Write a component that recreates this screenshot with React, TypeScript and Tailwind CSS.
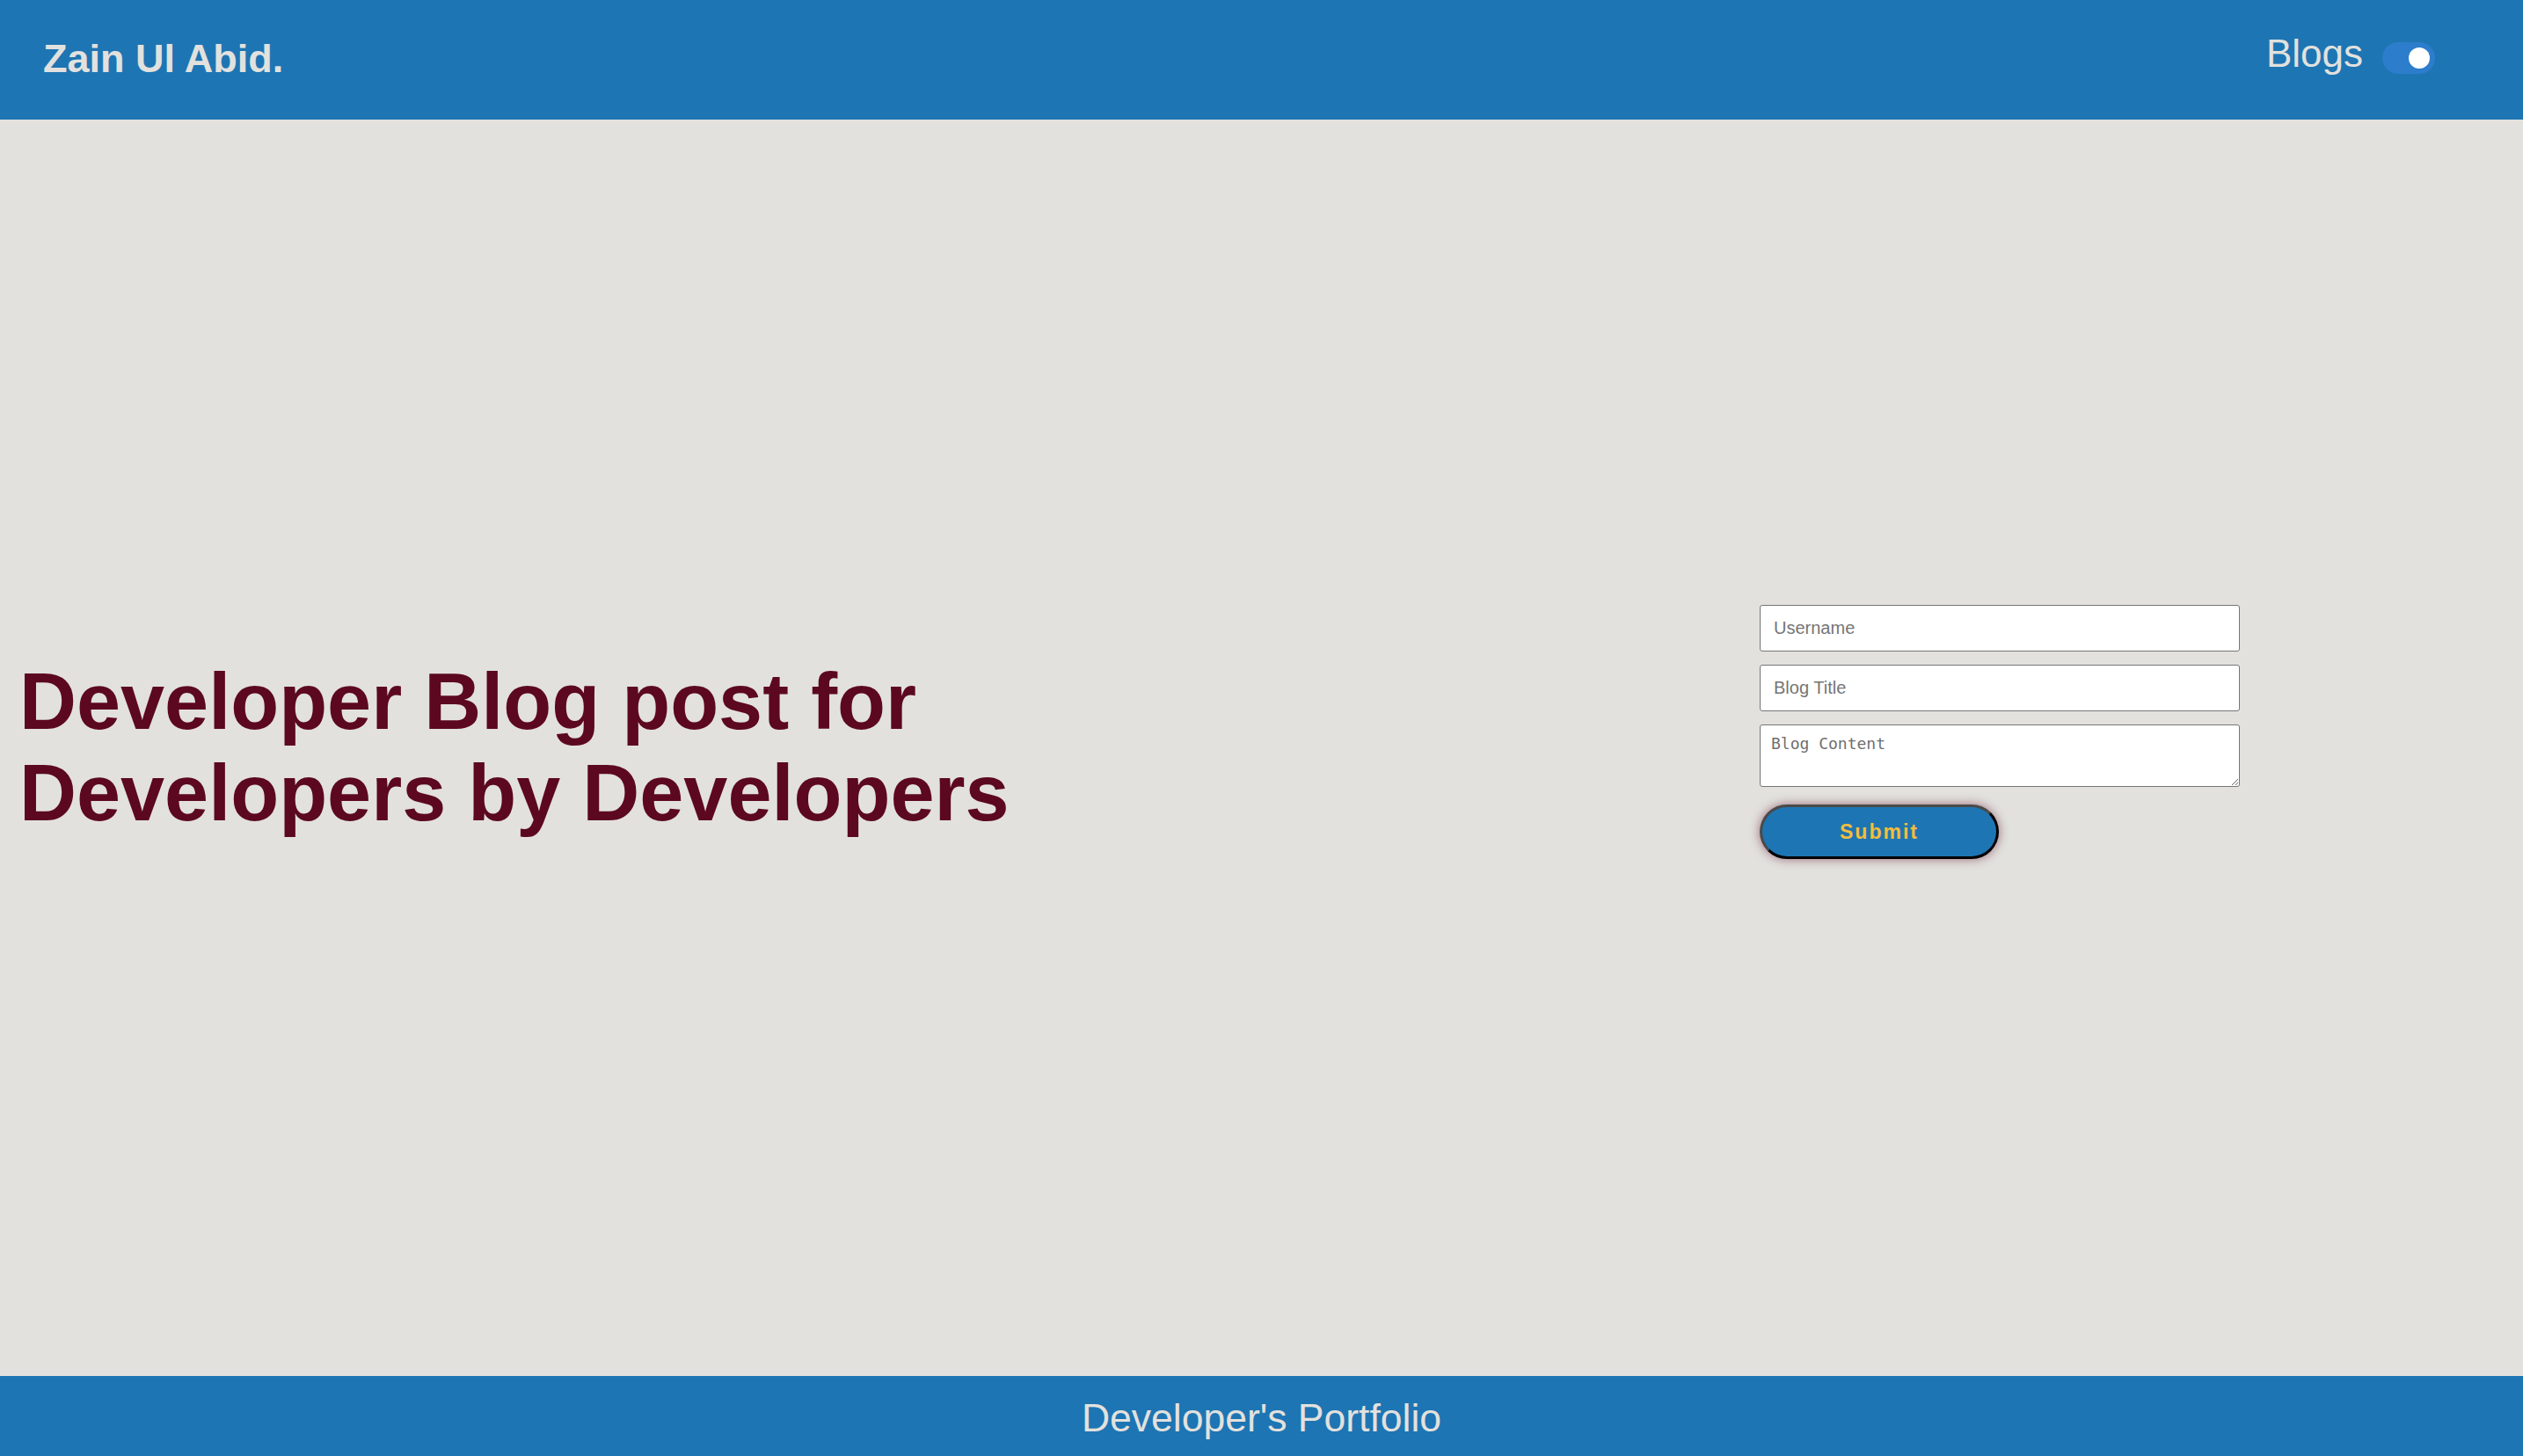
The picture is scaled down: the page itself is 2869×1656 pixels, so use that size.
const sans = "font-['Liberation_Sans',Arial,sans-serif]";

const Header = () => {
  return (
    <header className={`flex h-[136px] shrink-0 items-center justify-between bg-[#1e75b3] pl-[49px] pr-[100px] ${sans}`}>
      <h1 className="mb-[3px] text-[45px] font-bold leading-[1.15] text-[#e2e1de]">Zain Ul Abid.</h1>
      <div className="flex items-center gap-[22px]">
        <span className="mb-[14px] text-[44px] leading-[1.15] text-[#e2e1de]">Blogs</span>
        <div className="mb-[4px] flex h-[36px] w-[60px] items-center justify-end rounded-full bg-[#2c7dcb] pr-[6px]">
          <div className="h-[24px] w-[24px] rounded-full bg-white" />
        </div>
      </div>
    </header>
  );
};

const BlogForm = () => {
  return (
    <form className="mb-[36px] mr-[322px] flex w-[546px] flex-col" onSubmit={(e) => e.preventDefault()}>
      <input
        type="text"
        placeholder="Username"
        className={`h-[53px] rounded-[3px] border border-[#767676] bg-white px-[15px] text-[20px] text-black outline-none placeholder:text-[#757575] ${sans}`}
      />
      <input
        type="text"
        placeholder="Blog Title"
        className={`mt-[15px] h-[53px] rounded-[3px] border border-[#767676] bg-white px-[15px] text-[20px] text-black outline-none placeholder:text-[#757575] ${sans}`}
      />
      <textarea
        placeholder="Blog Content"
        className="mt-[15px] h-[71px] rounded-[3px] border border-[#767676] bg-white px-[12px] py-[10px] font-['DejaVu_Sans_Mono',monospace] text-[18px] leading-[1.2] text-black outline-none placeholder:text-[#6f6f6f]"
      />
      <button
        type="submit"
        className={`mt-[20px] h-[62px] w-[272px] rounded-full border-[3px] border-t-[#4a4a4a] border-l-[#4a4a4a] border-r-black border-b-black bg-[#1e75b3] text-[23px] font-bold tracking-[2px] text-[#f3bd3c] shadow-[0_0_12px_rgba(92,8,32,0.55)] ${sans}`}
      >
        Submit
      </button>
    </form>
  );
};

export default function App() {
  return (
    <div className={`flex h-[1656px] flex-col overflow-hidden bg-[#e2e1de] ${sans}`}>
      <Header />
      <main className="flex h-[1429px] shrink-0 items-center justify-between pl-[22px]">
        <h2 className="w-[1160px] text-[90px] font-bold leading-[1.149] text-[#5c0820]">
          Developer Blog post for Developers by Developers
        </h2>
        <BlogForm />
      </main>
      <footer className="shrink-0 bg-[#1e75b3] pt-[22px] pb-[30px] text-center">
        <p className="text-[44.5px] leading-[1.15] text-[#e2e1de]">Developer's Portfolio</p>
      </footer>
    </div>
  );
}
